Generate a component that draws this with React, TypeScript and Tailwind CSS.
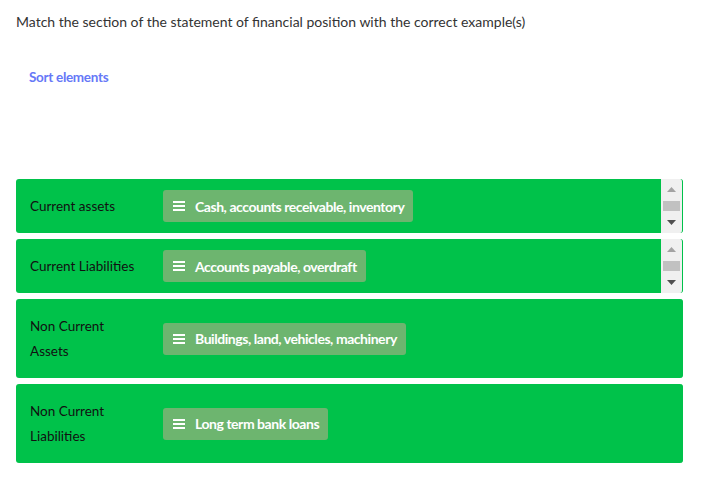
import React from "react";

type Row = {
  label: string;
  item: string;
  scroll: boolean;
};

const rows: Row[] = [
  { label: "Current assets", item: "Cash, accounts receivable, inventory", scroll: true },
  { label: "Current Liabilities", item: "Accounts payable, overdraft", scroll: true },
  { label: "Non Current Assets", item: "Buildings, land, vehicles, machinery", scroll: false },
  { label: "Non Current Liabilities", item: "Long term bank loans", scroll: false },
];

const Bars = () => (
  <svg width="12" height="10" viewBox="0 0 12 10" className="shrink-0">
    <rect x="0" y="0" width="12" height="2" fill="white" />
    <rect x="0" y="4" width="12" height="2" fill="white" />
    <rect x="0" y="8" width="12" height="2" fill="white" />
  </svg>
);

const ScrollBar = () => (
  <div className="w-[21px] self-stretch bg-[#f0f0f0] flex flex-col items-center justify-between py-[8px]">
    <svg width="9" height="5" viewBox="0 0 9 5">
      <polygon points="0,5 4.5,0 9,5" fill="#a3a3a3" />
    </svg>
    <div className="w-[17px] h-[10px] bg-[#c1c1c1]" />
    <svg width="9" height="5" viewBox="0 0 9 5">
      <polygon points="0,0 9,0 4.5,5" fill="#505050" />
    </svg>
  </div>
);

export default function App() {
  return (
    <div className="w-[712px] h-[491px] bg-white" style={{ fontFamily: "Lato, 'Noto Sans', sans-serif" }}>
      <p className="pt-[13px] pl-[16px] text-[14px] leading-[18px] text-[#333]">
        Match the section of the statement of financial position with the correct example(s)
      </p>
      <p className="pt-[37px] pl-[29px] text-[13.5px] leading-[18px] font-bold tracking-[-0.3px] text-[#6678f7]">
        Sort elements
      </p>
      <div className="mt-[93px] ml-[16px] w-[667px] flex flex-col gap-[6px]">
        {rows.map((r) => (
          <div key={r.label} className="flex items-stretch bg-[#00c24a] rounded-[3px] border-r border-[#00c24a] overflow-hidden">
            <div className="flex-1 flex items-center py-[11px] pl-[14px]">
              <div className="w-[133px] shrink-0 pr-[23px] py-[3.5px] text-[13.5px] leading-[25px] text-[#111]">{r.label}</div>
              <div className="h-[32px] flex items-center gap-[10px] pl-[10px] pr-[9px] bg-[#6db56f] rounded-[3px] text-white text-[14px] font-bold tracking-[-0.45px]">
                <Bars />
                <span>{r.item}</span>
              </div>
            </div>
            {r.scroll && <ScrollBar />}
          </div>
        ))}
      </div>
    </div>
  );
}
